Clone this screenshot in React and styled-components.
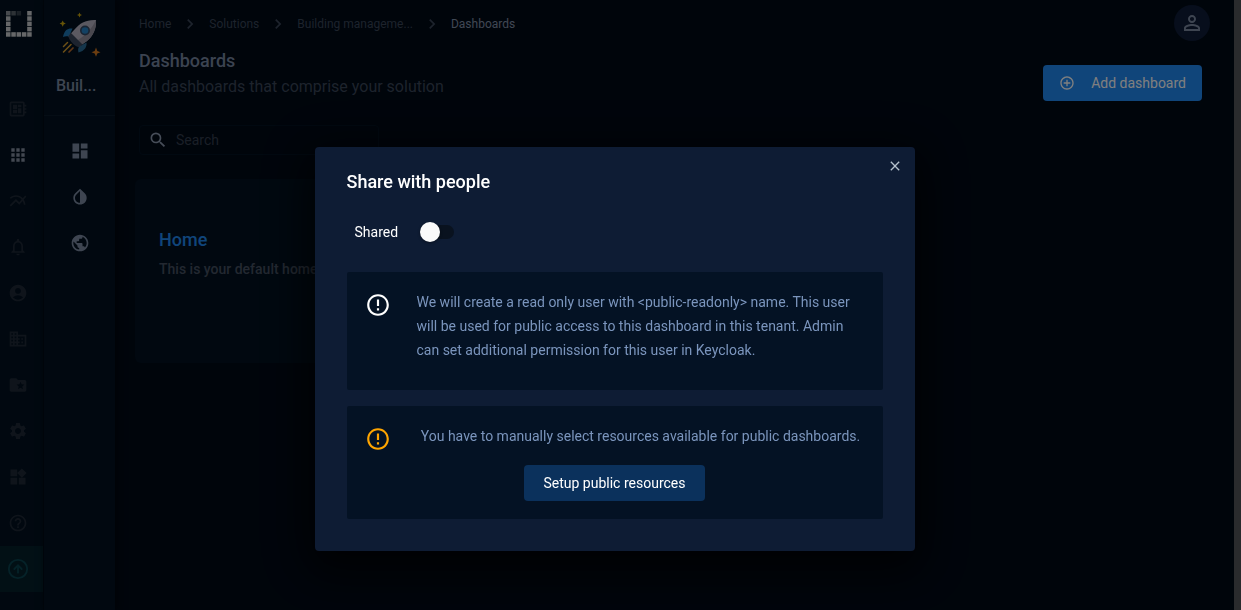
import React from "react";
import styled, { createGlobalStyle } from "styled-components";
import { CircleArrowUp } from "lucide-react";
import {
  MdOutlineDeveloperBoard, MdApps, MdMultilineChart, MdNotificationsNone, MdAccountCircle,
  MdBusiness, MdFolderSpecial, MdSettings, MdWidgets, MdHelpOutline,
  MdDashboard, MdInvertColors, MdPublic, MdSearch, MdPersonOutline, MdControlPoint,
  MdErrorOutline, MdClose, MdKeyboardArrowRight,
} from "react-icons/md";

const GlobalStyle = createGlobalStyle`
  * { box-sizing: border-box; }
  body {
    margin: 0;
    background: #000a17;
    color: #8c9cb8;
    font: 14px/20px Roboto, "Liberation Sans", sans-serif;
    overflow: hidden;
  }
  button, input { font: inherit; }
  h1, h2, h3, p { margin: 0; }
  a { color: inherit; text-decoration: none; }
  svg { display: block; flex: none; }
`;

const Shell = styled.div`
  display: flex;
  height: 100vh;
`;

const Rail = styled.nav`
  flex: none;
  display: flex;
  flex-direction: column;
  width: 44px;
  background: #021120;
  border-right: 1px solid #010c18;
`;

const RailLogo = styled.a`
  height: 86px;
  padding: 11px 6px;
`;

const RailLink = styled.a`
  display: flex;
  align-items: center;
  height: 46px;
  padding-left: ${(p) => (p.$accent ? 7 : 8)}px;
  color: ${(p) => (p.$accent ? "#0a4450" : p.$active ? "#8791a2" : "#1f2937")};
  background: ${(p) => (p.$accent ? "#04202b" : "transparent")};
`;

const Solution = styled.nav`
  flex: none;
  display: flex;
  flex-direction: column;
  width: 71px;
  background: #021120;
  box-shadow: 2px 0 8px #00050c;
`;

const SolutionHead = styled.div`
  display: flex;
  flex-direction: column;
  align-items: center;
  height: 116px;
  margin-bottom: 12px;
  padding: 8px 12px 0;
  border-bottom: 1px solid #0b1a2b;
`;

const SolutionName = styled.h2`
  width: 100%;
  margin-top: 16px;
  white-space: nowrap;
  color: #7d8ba3;
  font-size: 16px;
  font-weight: 500;
  line-height: 24px;
`;

const SolutionLink = styled.a`
  display: flex;
  align-items: center;
  justify-content: center;
  height: 46px;
  color: #7d8ba3;
`;

const Main = styled.main`
  flex: 1;
  min-width: 0;
  padding: 5px 32px 0 24px;
`;

const TopBar = styled.header`
  display: flex;
  align-items: center;
  justify-content: space-between;
  height: 36px;
  margin-right: -8px;
`;

const Crumbs = styled.nav`
  display: flex;
  align-items: center;
  gap: 9px;
  padding-top: 2px;
  color: #3a4659;
  font-size: 12px;
`;

const Crumb = styled.a`
  white-space: nowrap;
  color: ${(p) => (p.$current ? "#8090a8" : "#3a4659")};
`;

const Avatar = styled.button`
  display: grid;
  place-items: center;
  width: 36px;
  height: 36px;
  padding: 0;
  border: 0;
  border-radius: 50%;
  background: #0e1c38;
  color: #7d8ba3;
`;

const Heading = styled.div`
  display: flex;
  align-items: flex-end;
  justify-content: space-between;
  margin-top: 8px;
`;

const Title = styled.h1`
  color: #7786a0;
  font-size: 18px;
  font-weight: 500;
  line-height: 24px;
`;

const Subtitle = styled.p`
  color: #3a4659;
  font-size: 16px;
  line-height: 28px;
`;

const AddButton = styled.button`
  display: flex;
  align-items: center;
  gap: 16px;
  height: 36px;
  padding: 0 16px;
  border: 0;
  border-radius: 4px;
  background: #208af4;
  color: #fff;
`;

const SearchBox = styled.label`
  display: flex;
  align-items: center;
  gap: 8px;
  width: 240px;
  height: 30px;
  margin-top: 24px;
  padding: 0 8px;
  border: 1px solid #031222;
  border-radius: 4px;
  color: #8c9ab0;
`;

const SearchInput = styled.input`
  flex: 1;
  min-width: 0;
  padding: 0;
  border: 0;
  outline: 0;
  background: transparent;
  color: #8c9ab0;
  &::placeholder { color: #343e4e; opacity: 1; }
`;

const Card = styled.article`
  width: 320px;
  height: 184px;
  margin: 24px 0 0 -4px;
  padding: 48px 24px;
  border-radius: 6px;
  background: #021120;
`;

const CardTitle = styled.h3`
  color: #208af4;
  font-size: 18px;
  font-weight: 500;
  line-height: 26px;
`;

const CardText = styled.p`
  margin-top: 6px;
  color: #465162;
  font-weight: 500;
  white-space: nowrap;
`;

const ScrollTrack = styled.div`
  flex: none;
  width: 7px;
  background: #55565a;
`;

const Overlay = styled.div`
  position: fixed;
  inset: 0;
  display: flex;
  align-items: flex-start;
  justify-content: center;
  padding: 147px 12px 0 0;
  background: rgba(0, 0, 0, 0.5);
`;

const Dialog = styled.section`
  position: relative;
  width: 600px;
  padding: 23px 32px 32px;
  border-radius: 4px;
  background: #0e1c34;
  box-shadow: 0 11px 15px -7px rgba(0, 0, 0, 0.2), 0 24px 38px 3px rgba(0, 0, 0, 0.3),
    0 9px 46px 8px rgba(0, 0, 0, 0.6);
`;

const DialogTitle = styled.h2`
  color: #fff;
  font-size: 18px;
  font-weight: 500;
  line-height: 24px;
`;

const CloseButton = styled.button`
  position: absolute;
  top: 8px;
  right: 9px;
  display: grid;
  place-items: center;
  width: 22px;
  height: 22px;
  padding: 0;
  border: 0;
  background: transparent;
  color: #b4c0cc;
`;

const ShareRow = styled.label`
  display: flex;
  align-items: center;
  gap: 22px;
  margin: 28px 0 30px;
  padding-left: 8px;
  color: #fff;
`;

const Toggle = styled.input`
  appearance: none;
  display: flex;
  align-items: center;
  width: 34px;
  height: 14px;
  margin: 0;
  border-radius: 7px;
  background: #09121f;
  &::before {
    content: "";
    width: 20px;
    height: 20px;
    flex: none;
    border-radius: 50%;
    background: #fafafa;
    box-shadow: 0 1px 3px rgba(0, 0, 0, 0.4);
  }
  &:checked { justify-content: flex-end; background: #208af4; }
`;

const Notice = styled.div`
  padding: 18px 18px ${(p) => (p.$roomy ? 28 : 18)}px;
  border-radius: 2px;
  background: #041224;
  & + & { margin-top: 16px; }
`;

const NoticeRow = styled.div`
  display: flex;
  align-items: flex-start;
  gap: 26px;
  color: ${(p) => p.$tone};
  svg { margin-top: 2px; }
`;

const NoticeText = styled.p`
  flex: 1;
  color: #7b95bd;
  line-height: 24px;
  text-align: ${(p) => (p.$center ? "center" : "left")};
`;

const SetupButton = styled.button`
  display: block;
  height: 36px;
  margin: 13px auto 0;
  padding: 0 20px;
  border: 0;
  border-radius: 4px;
  background: #0b315c;
  color: #fff;
`;

const railItems = [
  ["Devices", MdOutlineDeveloperBoard],
  ["Solutions", MdApps, true],
  ["Analytics", MdMultilineChart],
  ["Alarms", MdNotificationsNone],
  ["Users", MdAccountCircle],
  ["Organisation", MdBusiness],
  ["Resources", MdFolderSpecial],
  ["Settings", MdSettings],
  ["Widgets", MdWidgets],
  ["Help", MdHelpOutline],
];

const solutionItems = [
  ["Dashboards", MdDashboard],
  ["Theme", MdInvertColors],
  ["Public access", MdPublic],
];

const logoPixels = [
  [0, 0, 0.55], [1, 0, 0.35], [2, 0, 0.2], [4, 0, 0.8],
  [0, 1, 0.75], [4, 1, 0.8], [0, 2, 0.8], [4, 2, 0.8], [0, 3, 0.8], [4, 3, 0.8],
  [0, 4, 0.8], [1, 4, 0.8], [2, 4, 0.8], [3, 4, 0.8], [4, 4, 0.8],
];

function Logo() {
  return (
    <svg width="26" height="26" viewBox="0 0 26 26">
      {logoPixels.map(([x, y, o]) => (
        <rect key={`${x}-${y}`} x={x * 5.3} y={y * 5.3} width="4.500" height="4.500" fill="#fff" opacity={o} />
      ))}
    </svg>
  );
}

function Rocket() {
  return (
    <svg width="50" height="50" viewBox="0 0 50 50">
      <path d="M24.500 4.500l.8 1.700 1.700.8-1.700.8-.8 1.700-.8-1.700-1.700-.8 1.700-.8z" fill="#cfa80f" />
      <path d="M7.700 12.500l1 2.100 2.100 1-2.100 1-1 2.100-1-2.100-2.100-1 2.100-1z" fill="#cfa80f" />
      <path d="M41 39.500l1.300 3.400 3.200 1.300-3.200 1.300-1.300 3.200-1.300-3.200-3.200-1.300 3.200-1.300z" fill="#d87a20" />
      <path d="M17.500 20.500c-5-.4-8 1.500-9.500 8.500 2-.8 4-1 6-.2z" fill="#1f78b8" />
      <path d="M31.500 34.500c.5 4.500-2 8.500-8 10-.6-2-.6-4 .6-6z" fill="#2a6d98" />
      <path d="M41 12c-10-.5-16 3-21.500 9.500L13.500 28l10.500 10.500 8-5.500c6-5 9.500-12 9-21z" fill="#b6b2c2" />
      <path d="M41 12c.5 9-3 16-9 21l-8 5.500-4.500-4.500C29 29 37 21 41 12z" fill="#94909f" />
      <path d="M16 25l11.500 11.500-3.500 2.500c-3 .5-10-6-10.700-11z" fill="#3b465c" />
      <circle cx="30" cy="22.500" r="5" fill="#354964" />
      <circle cx="30" cy="22.500" r="3.300" fill="#2782c6" />
      <path d="M8.500 38.500l4-4M8.500 44l7.500-7.500" stroke="#dba02e" strokeWidth="1.500" strokeLinecap="round" />
      <path d="M14 44l4-4" stroke="#c06c2c" strokeWidth="1.700" strokeLinecap="round" />
    </svg>
  );
}

export default function App() {
  return (
    <>
      <GlobalStyle />
      <Shell>
        <Rail aria-label="Main">
          <RailLogo href="#" aria-label="Start"><Logo /></RailLogo>
          {railItems.map(([label, Icon, active]) => (
            <RailLink key={label} href="#" aria-label={label} $active={active}><Icon size={20} /></RailLink>
          ))}
          <RailLink href="#" aria-label="Upgrade" $accent><CircleArrowUp size={22} /></RailLink>
        </Rail>
        <Solution aria-label="Solution">
          <SolutionHead>
            <Rocket />
            <SolutionName>Buil...</SolutionName>
          </SolutionHead>
          {solutionItems.map(([label, Icon]) => (
            <SolutionLink key={label} href="#" aria-label={label}><Icon size={20} /></SolutionLink>
          ))}
        </Solution>
        <Main>
          <TopBar>
            <Crumbs aria-label="Breadcrumb">
              <Crumb href="#">Home</Crumb>
              <MdKeyboardArrowRight size={20} />
              <Crumb href="#">Solutions</Crumb>
              <MdKeyboardArrowRight size={20} />
              <Crumb href="#">Building manageme...</Crumb>
              <MdKeyboardArrowRight size={20} />
              <Crumb href="#" $current>Dashboards</Crumb>
            </Crumbs>
            <Avatar aria-label="Account"><MdPersonOutline size={24} /></Avatar>
          </TopBar>
          <Heading>
            <div>
              <Title>Dashboards</Title>
              <Subtitle>All dashboards that comprise your solution</Subtitle>
            </div>
            <AddButton><MdControlPoint size={16} />Add dashboard</AddButton>
          </Heading>
          <SearchBox>
            <MdSearch size={20} />
            <SearchInput type="text" placeholder="Search" aria-label="Search" />
          </SearchBox>
          <Card>
            <CardTitle>Home</CardTitle>
            <CardText>This is your default home</CardText>
          </Card>
        </Main>
        <ScrollTrack />
      </Shell>
      <Overlay>
        <Dialog role="dialog" aria-modal="true" aria-labelledby="share-title">
          <DialogTitle id="share-title">Share with people</DialogTitle>
          <CloseButton aria-label="Close"><MdClose size={16} /></CloseButton>
          <ShareRow>
            Shared
            <Toggle type="checkbox" role="switch" />
          </ShareRow>
          <Notice $roomy>
            <NoticeRow $tone="#fff">
              <MdErrorOutline size={26} />
              <NoticeText>
                We will create a read only user with &lt;public-readonly&gt; name. This user will be used for
                public access to this dashboard in this tenant. Admin can set additional permission for this
                user in Keycloak.
              </NoticeText>
            </NoticeRow>
          </Notice>
          <Notice>
            <NoticeRow $tone="#ffa500">
              <MdErrorOutline size={26} />
              <NoticeText $center>
                You have to manually select resources available for public dashboards.
              </NoticeText>
            </NoticeRow>
            <SetupButton>Setup public resources</SetupButton>
          </Notice>
        </Dialog>
      </Overlay>
    </>
  );
}
